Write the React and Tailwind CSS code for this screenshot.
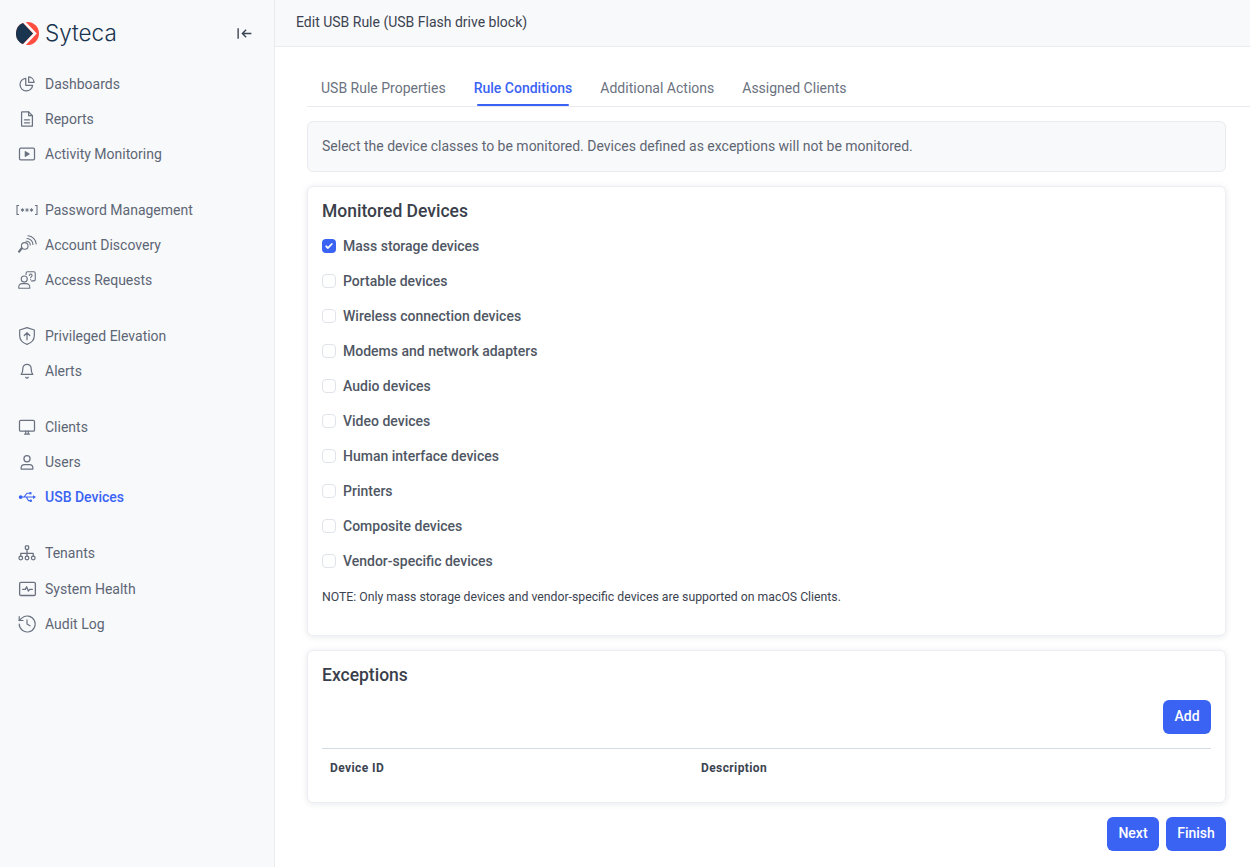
const S = ({ children, className = "w-5 h-5", sw = 1.5, vb = "0 0 24 24" }) => (
  <svg viewBox={vb} className={className} fill="none" stroke="currentColor" strokeWidth={sw} strokeLinecap="round" strokeLinejoin="round">{children}</svg>
);

const icons = {
  dash: <S><path d="M10.500 5.200a7.600 7.600 0 1 0 8.300 8.300h-8.300z" /><path d="M14 3.500a7 7 0 0 1 6.500 6.500H14z" /></S>,
  report: <S><path d="M6 3.500h8l4.500 4.500v12.500H6a.5.5 0 0 1-.5-.5V4a.5.5 0 0 1 .5-.5z" /><path d="M14 3.500V8h4.500M9 13h6M9 16.500h6" /></S>,
  activity: <S><rect x="3" y="5" width="18" height="14" rx="1.500" /><path d="M10 9.200v5.600l4.500-2.800z" fill="currentColor" /></S>,
  password: (
    <svg viewBox="0 0 22 12" className="h-3 w-[22px]" fill="none" stroke="currentColor" strokeWidth="1.100">
      <path d="M3 1.500H1v9h2M19 1.500h2v9h-2" />
      <path strokeWidth="0.900" d="M6.500 4.200v3.600M4.900 5.100l3.200 1.800M8.100 5.100L4.900 6.900M11 4.200v3.600M9.400 5.100l3.200 1.800M12.600 5.100L9.400 6.900M15.500 4.200v3.600M13.900 5.100l3.200 1.800M17.100 5.100l-3.200 1.800" />
    </svg>
  ),
  discovery: <S className="h-[23px] w-[23px]" sw={1.2}><circle cx="9.500" cy="13.500" r="3.600" /><path d="M7 16l-3.500 4.500-.8-.8L6.200 15M12 5.500a6.500 6.500 0 0 1 6.500 6.500M13 2.500a9.500 9.500 0 0 1 9 9M11 8.500a3.800 3.800 0 0 1 4.500 4" /></S>,
  access: <S className="h-6 w-6" sw={1.2}><circle cx="9" cy="11" r="3.300" /><path d="M3 21v-1.500A3.500 3.500 0 0 1 6.500 16h5a3.500 3.500 0 0 1 3.500 3.500V21zM11 6V4.500A1.500 1.500 0 0 1 12.500 3h7A1.500 1.500 0 0 1 21 4.500v7a1.500 1.500 0 0 1-1.500 1.500H17" /><path d="M14.500 7a1.500 1.500 0 1 1 2.200 1.400c-.5.3-.7.6-.7 1.100M16 11.500v.1" /></S>,
  shield: <S className="h-6 w-6" sw={1.3}><path d="M12 2.800l8 2.700v6c0 4.500-3.200 8-8 9.700-4.800-1.700-8-5.200-8-9.700v-6z" /><path d="M12 16V9M9 11.500L12 8.500l3 3" /></S>,
  bell: <S><path d="M12 4a5 5 0 0 0-5 5c0 5-2 7-2 7h14s-2-2-2-7a5 5 0 0 0-5-5zM10.500 19.500a1.600 1.600 0 0 0 3 0" /></S>,
  clients: <S><rect x="3" y="4" width="18" height="13" rx="1.500" /><path d="M9 20.500h6M10.500 17v3.500M13.500 17v3.500" /></S>,
  users: <S><circle cx="12" cy="8" r="3.700" /><path d="M5 20.500V19a4 4 0 0 1 4-4h6a4 4 0 0 1 4 4v1.500z" /></S>,
  usb: (
    <svg viewBox="0 0 24 24" className="h-[18px] w-[18px]" fill="none" stroke="currentColor" strokeWidth="1.500" strokeLinejoin="round">
      <circle cx="3.500" cy="12" r="2.500" fill="currentColor" stroke="none" />
      <path d="M3 12h18M8 12l4-5h3M11 12l3 5h2" />
      <path d="M24 12l-4-2.500v5z" fill="currentColor" stroke="none" />
      <rect x="15" y="5.500" width="3" height="3" fill="currentColor" stroke="none" />
      <circle cx="17" cy="17" r="1.700" fill="currentColor" stroke="none" />
    </svg>
  ),
  tenants: <S><rect x="10" y="3.500" width="4" height="4" rx="1" /><circle cx="4.500" cy="18" r="2.200" /><circle cx="12" cy="18" r="2.200" /><circle cx="19.500" cy="18" r="2.200" /><path d="M12 7.500v8M4.500 15.800V12.500h15v3.300" /></S>,
  health: <S className="h-[21px] w-[21px]"><rect x="3" y="5" width="18" height="15" rx="1.500" /><path d="M6.500 13h3l1.500-3 2 5 1.500-2h3" /></S>,
  audit: <S className="h-6 w-6" sw={1.3}><path d="M3.500 12a8.700 8.700 0 1 0 2.800-6.400L3.500 8.200" /><path d="M3.500 4v4.200h4.200M12 7.500V12l3.200 2" /></S>,
};

const groups = [
  [["dash", "Dashboards"], ["report", "Reports"], ["activity", "Activity Monitoring"]],
  [["password", "Password Management"], ["discovery", "Account Discovery"], ["access", "Access Requests"]],
  [["shield", "Privileged Elevation"], ["bell", "Alerts"]],
  [["clients", "Clients"], ["users", "Users"], ["usb", "USB Devices", true]],
  [["tenants", "Tenants"], ["health", "System Health"], ["audit", "Audit Log"]],
];

const devices = ["Mass storage devices", "Portable devices", "Wireless connection devices", "Modems and network adapters", "Audio devices", "Video devices", "Human interface devices", "Printers", "Composite devices", "Vendor-specific devices"];

const Btn = ({ children, className = "" }) => (
  <button className={`h-[34px] rounded-md bg-[#3b63f3] pb-[2px] text-sm font-medium text-white ${className}`}>{children}</button>
);

export default function App() {
  return (
    <div className="flex h-[867px] w-[1250px] overflow-hidden bg-white font-['Roboto',sans-serif] text-sm">
      <aside className="w-[275px] shrink-0 border-r border-[#e9ebf0] bg-[#f8f9fb]">
        <div className="flex h-[66px] items-center justify-between pl-4 pr-[21px]">
          <div className="flex items-center gap-[6px]">
            <svg viewBox="0 0 23 23" className="h-[23px] w-[23px]">
              <circle cx="11.500" cy="11.500" r="11.500" fill="#ff4d3f" />
              <path d="M7 0.900A11.500 11.500 0 0 0 7 22.100L17 11.500z" fill="#19344f" />
              <path d="M6.300 0l11 11.500-11 11.500h3.500l11-11.500L9.800 0z" fill="#f8f9fb" />
            </svg>
            <span className="font-['Inter',sans-serif] text-[22.5px] font-light leading-none text-[#19344f]">Syteca</span>
          </div>
          <svg viewBox="0 0 16 16" className="h-[17px] w-[17px] text-[#3b4452]" fill="none" stroke="currentColor" strokeWidth="1.300">
            <path d="M2 3v10M14.500 8H6M9.500 4.500L6 8l3.500 3.500" />
          </svg>
        </div>
        <nav className="flex flex-col gap-[21px]">
          {groups.map((g, i) => (
            <div key={i} className="flex flex-col">
              {g.map(([ic, label, active]) => (
                <div key={label} className={`flex items-center ${label === "Tenants" ? "h-[36px] pb-px" : "h-[35px]"} ${active ? "font-medium text-[#3b63f3]" : "text-[#5d6675]"}`}>
                  <span className={`flex w-[45px] shrink-0 justify-center pl-[16px] pr-[7px] ${active ? "" : "text-[#6a7280]"}`}>{icons[ic]}</span>
                  <span>{label}</span>
                </div>
              ))}
            </div>
          ))}
        </nav>
      </aside>

      <main className="flex min-w-0 flex-1 flex-col">
        <header className="flex h-[47px] shrink-0 items-center border-b border-[#e9ebf0] bg-[#f8f9fb] pb-[2px] pl-[21px] text-[#3c4350]">
          Edit USB Rule (USB Flash drive block)
        </header>
        <div className="pl-8 pr-6">
          <div className="-mr-6 mt-[22px] flex h-[38px] gap-[28px] border-b border-[#e9ebf0] pl-[14px] text-[#6b7280]">
            <span className="pt-[9px]">USB Rule Properties</span>
            <span className="relative pt-[9px] font-medium text-[#3b63f3]">
              Rule Conditions
              <span className="absolute bottom-0 left-[3px] right-[3px] h-[2px] rounded-full bg-[#3b63f3]" />
            </span>
            <span className="pt-[9px]">Additional Actions</span>
            <span className="pt-[9px]">Assigned Clients</span>
          </div>

          <div className="mt-[14px] flex h-[51px] items-center rounded-md border border-[#e9ebf0] bg-[#f8f9fb] px-[14px] pb-[2px] text-[#5f6673]">
            Select the device classes to be monitored. Devices defined as exceptions will not be monitored.
          </div>

          <section className="mt-[14px] h-[450px] rounded-md border border-[#eceef3] bg-white px-[14px] pt-[13px] shadow-[0_1px_6px_rgba(30,40,70,0.10)]">
            <h2 className="text-[17.5px] font-medium leading-[22px] text-[#3a3f4b]">Monitored Devices</h2>
            <div className="mt-[6px] flex flex-col">
              {devices.map((d, i) => (
                <label key={d} className="flex h-[35px] items-center gap-[7px] font-medium text-[#505764]">
                  {i === 0 ? (
                    <span className="flex h-[14px] w-[14px] items-center justify-center rounded-[4px] bg-[#3b63f3]">
                      <svg viewBox="0 0 14 14" className="h-[14px] w-[14px]" fill="none" stroke="#fff" strokeWidth="1.800" strokeLinecap="round" strokeLinejoin="round"><path d="M4.200 7.300L6 9l3.800-4" /></svg>
                    </span>
                  ) : (
                    <span className="h-[14px] w-[14px] rounded-[4px] border border-[#e0e3ea] bg-white" />
                  )}
                  {d}
                </label>
              ))}
            </div>
            <p className="mt-[11px] text-[12.25px] leading-4 text-[#3c4350]">NOTE: Only mass storage devices and vendor-specific devices are supported on macOS Clients.</p>
          </section>

          <section className="mt-[14px] h-[153px] rounded-md border border-[#eceef3] bg-white px-[14px] pt-[13px] shadow-[0_1px_6px_rgba(30,40,70,0.10)]">
            <h2 className="text-[17.5px] font-medium leading-[22px] text-[#3a3f4b]">Exceptions</h2>
            <div className="mt-[14px] flex justify-end">
              <Btn className="w-12">Add</Btn>
            </div>
            <div className="mt-[14px] grid h-[39px] grid-cols-[371px_1fr] items-center border-t border-[#d5dbe6] px-2 text-xs font-bold tracking-[0.4px] text-[#3c4350]">
              <span>Device ID</span>
              <span>Description</span>
            </div>
          </section>

          <div className="mt-[14px] flex justify-end gap-[7px]">
            <Btn className="w-[52px]">Next</Btn>
            <Btn className="w-[60px]">Finish</Btn>
          </div>
        </div>
      </main>
    </div>
  );
}
